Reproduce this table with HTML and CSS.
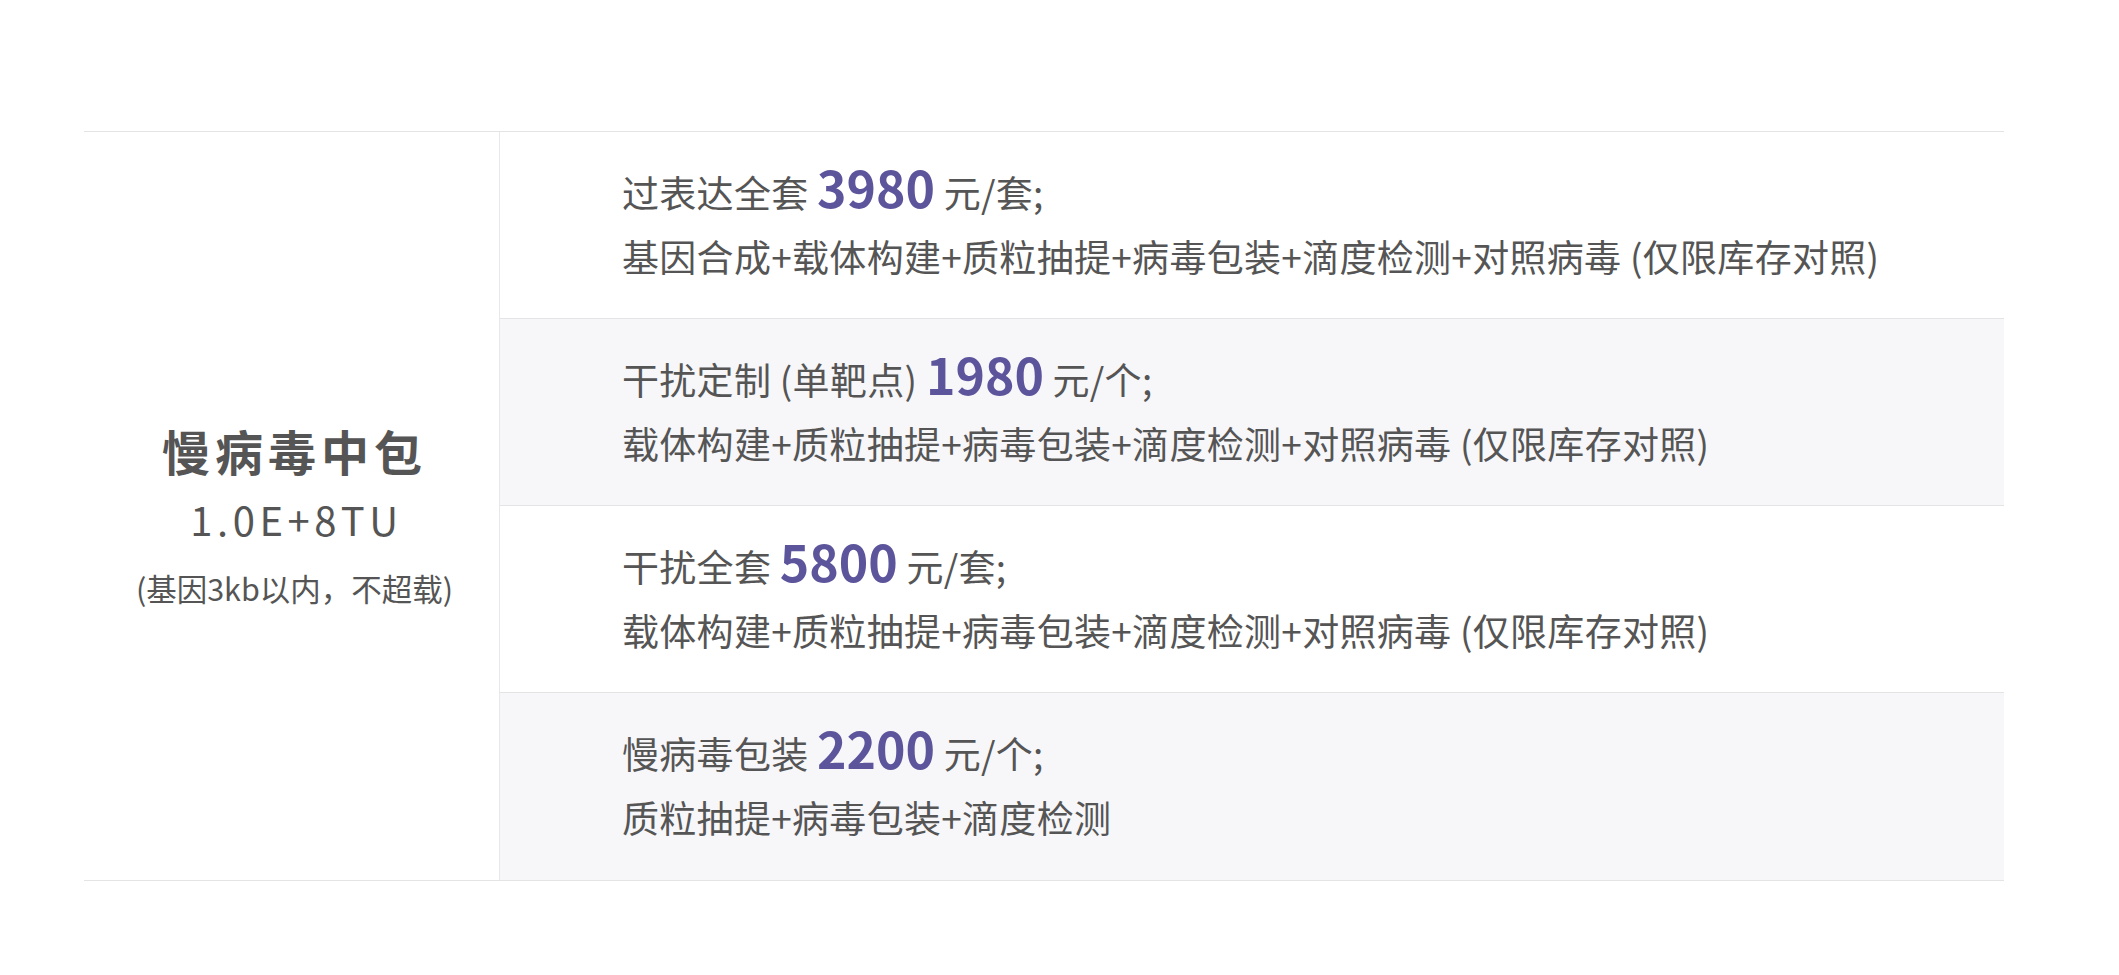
FILE: index.html
```html
<!DOCTYPE html>
<html lang="zh-CN">
<head>
<meta charset="utf-8">
<title>慢病毒中包</title>
<link rel="stylesheet" href="styles.css">
</head>
<body>
<div class="page">
  <div class="price-table">
    <div class="package">
      <div class="package-name">慢病毒中包</div>
      <div class="package-titer">1.0E+8TU</div>
      <div class="package-note">(基因3kb以内，不超载)</div>
    </div>
    <div class="items">
      <div class="item">
        <div class="item-title">过表达全套 <span class="num">3980</span> 元/套;</div>
        <div class="item-desc">基因合成+载体构建+质粒抽提+病毒包装+滴度检测+对照病毒 (仅限库存对照)</div>
      </div>
      <div class="item alt">
        <div class="item-title">干扰定制 (单靶点) <span class="num">1980</span> 元/个;</div>
        <div class="item-desc">载体构建+质粒抽提+病毒包装+滴度检测+对照病毒 (仅限库存对照)</div>
      </div>
      <div class="item">
        <div class="item-title">干扰全套 <span class="num">5800</span> 元/套;</div>
        <div class="item-desc">载体构建+质粒抽提+病毒包装+滴度检测+对照病毒 (仅限库存对照)</div>
      </div>
      <div class="item alt last">
        <div class="item-title">慢病毒包装 <span class="num">2200</span> 元/个;</div>
        <div class="item-desc">质粒抽提+病毒包装+滴度检测</div>
      </div>
    </div>
  </div>
</div>
</body>
</html>
```
FILE: styles.css
```css
html, body {
  margin: 0;
  padding: 0;
  background: #ffffff;
}

body {
  font-family: "Noto Sans CJK SC", "Noto Sans", sans-serif;
  color: #555555;
}

.page {
  padding: 131px 0 0 84px;
}

.price-table {
  width: 1920px;
  display: flex;
  border-top: 1px solid #e4e4e4;
  border-bottom: 1px solid #e4e4e4;
}

.package {
  width: 416px;
  flex: none;
  border-right: 1px solid #e8e8ea;
  display: flex;
  flex-direction: column;
  align-items: center;
  justify-content: center;
  padding: 25px 0 0 6px;
  box-sizing: border-box;
}

.package-name {
  font-size: 48px;
  font-weight: 700;
  line-height: 68px;
  letter-spacing: 5px;
}

.package-titer {
  font-size: 40px;
  line-height: 70px;
  letter-spacing: 4.5px;
  padding-left: 4px;
}

.package-note {
  font-size: 30.5px;
  line-height: 68px;
}

.items {
  flex: 1;
  display: flex;
  flex-direction: column;
}

.item {
  height: 187px;
  box-sizing: border-box;
  padding: 28px 0 0 122px;
  border-bottom: 1px solid #e4e4e4;
  font-size: 37px;
}

.item.last {
  border-bottom: none;
}

.item.alt {
  background: #f7f7fa;
}

.item-title,
.item-desc {
  line-height: 64px;
  white-space: nowrap;
  letter-spacing: 0.3px;
}

.num {
  font-size: 50px;
  font-weight: 700;
  line-height: 1;
  letter-spacing: 0;
  color: #5d559c;
}
```
